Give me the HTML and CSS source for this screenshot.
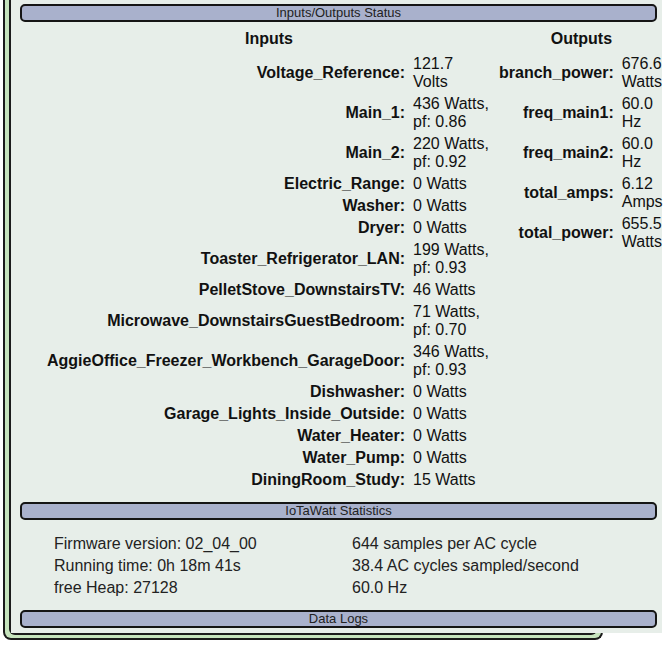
FILE: index.html
```html
<!DOCTYPE html>
<html lang="en">
<head>
  <meta charset="UTF-8">
  <meta name="viewport" content="width=device-width, initial-scale=1.0">
  <title>IoTaWatt Status</title>
  <link rel="stylesheet" href="styles.css">
</head>
<body>
  <div class="frame">
    <div class="panel">
      <div class="content">
        <div class="bar">Inputs/Outputs Status</div>

        <div class="io">
          <table class="io-table inputs">
            <tr><th colspan="2">Inputs</th></tr>
            <tr><td class="name">Voltage_Reference:</td><td class="val">121.7 Volts</td></tr>
            <tr><td class="name">Main_1:</td><td class="val">436 Watts, pf: 0.86</td></tr>
            <tr><td class="name">Main_2:</td><td class="val">220 Watts, pf: 0.92</td></tr>
            <tr><td class="name">Electric_Range:</td><td class="val">0 Watts</td></tr>
            <tr><td class="name">Washer:</td><td class="val">0 Watts</td></tr>
            <tr><td class="name">Dryer:</td><td class="val">0 Watts</td></tr>
            <tr><td class="name">Toaster_Refrigerator_LAN:</td><td class="val">199 Watts, pf: 0.93</td></tr>
            <tr><td class="name">PelletStove_DownstairsTV:</td><td class="val">46 Watts</td></tr>
            <tr><td class="name">Microwave_DownstairsGuestBedroom:</td><td class="val">71 Watts, pf: 0.70</td></tr>
            <tr><td class="name">AggieOffice_Freezer_Workbench_GarageDoor:</td><td class="val">346 Watts, pf: 0.93</td></tr>
            <tr><td class="name">Dishwasher:</td><td class="val">0 Watts</td></tr>
            <tr><td class="name">Garage_Lights_Inside_Outside:</td><td class="val">0 Watts</td></tr>
            <tr><td class="name">Water_Heater:</td><td class="val">0 Watts</td></tr>
            <tr><td class="name">Water_Pump:</td><td class="val">0 Watts</td></tr>
            <tr><td class="name">DiningRoom_Study:</td><td class="val">15 Watts</td></tr>
          </table>

          <table class="io-table outputs">
            <tr><th colspan="2">Outputs</th></tr>
            <tr><td class="name">branch_power:</td><td class="val">676.6 Watts</td></tr>
            <tr><td class="name">freq_main1:</td><td class="val">60.0 Hz</td></tr>
            <tr><td class="name">freq_main2:</td><td class="val">60.0 Hz</td></tr>
            <tr><td class="name">total_amps:</td><td class="val">6.12 Amps</td></tr>
            <tr><td class="name">total_power:</td><td class="val">655.5 Watts</td></tr>
          </table>
        </div>

        <div class="bar">IoTaWatt Statistics</div>

        <div class="stats">
          <div>
            Firmware version: 02_04_00<br>
            Running time: 0h 18m 41s<br>
            free Heap: 27128
          </div>
          <div>
            644 samples per AC cycle<br>
            38.4 AC cycles sampled/second<br>
            60.0 Hz
          </div>
        </div>

        <div class="bar">Data Logs</div>
      </div>
    </div>
  </div>
</body>
</html>
```

FILE: styles.css
```css
    body {
      margin: 0;
      background: #fff;
      font-family: "Liberation Sans", Arial, sans-serif;
      color: #111;
    }
    .frame {
      box-sizing: border-box;
      width: 600px;
      margin-left: 3px;
      background: #c6e4bd;
      border: 2px solid #1b1b1b;
      border-top: none;
      border-radius: 0 0 8px 8px;
      padding: 0 4px 3px 4px;
    }
    .panel {
      background: #e7eee9;
      border: 2px solid #1b1b1b;
      border-top: none;
      border-radius: 0 0 6px 6px;
    }
    .content {
      width: 651px;
      background: #e7eee9;
      padding: 4px 0 5px 0;
    }
    .bar {
      box-sizing: border-box;
      height: 18px;
      margin: 0 5px 0 9px;
      background: #a9b1cc;
      border: 2px solid #151515;
      border-radius: 5px;
      font-size: 13px;
      line-height: 14px;
      text-align: center;
      color: #222;
    }
    .io {
      display: flex;
      align-items: flex-start;
      margin-top: 6px;
      margin-bottom: 11px;
      padding-left: 32px;
    }
    .io-table {
      border-collapse: collapse;
      border-spacing: 0;
      flex-shrink: 0;
      font-size: 16px;
    }
    .io-table th {
      padding: 2px 0 5px;
      line-height: 18px;
      font-weight: bold;
      text-align: center;
    }
    .io-table td {
      padding: 2px 0;
      line-height: 18px;
      vertical-align: middle;
    }
    .io-table .name {
      text-align: right;
      font-weight: bold;
      white-space: nowrap;
      padding-left: 4px;
      padding-right: 8px;
    }
    .io-table .val {
      text-align: left;
      padding-right: 4px;
    }
    .inputs .val {
      width: 78px;
    }
    .outputs .val {
      width: 42px;
    }
    .stats {
      display: grid;
      grid-template-columns: 298px auto;
      margin: 13px 0 11px;
      padding-left: 43px;
      font-size: 16px;
      line-height: 22px;
      color: #222;
    }
```
